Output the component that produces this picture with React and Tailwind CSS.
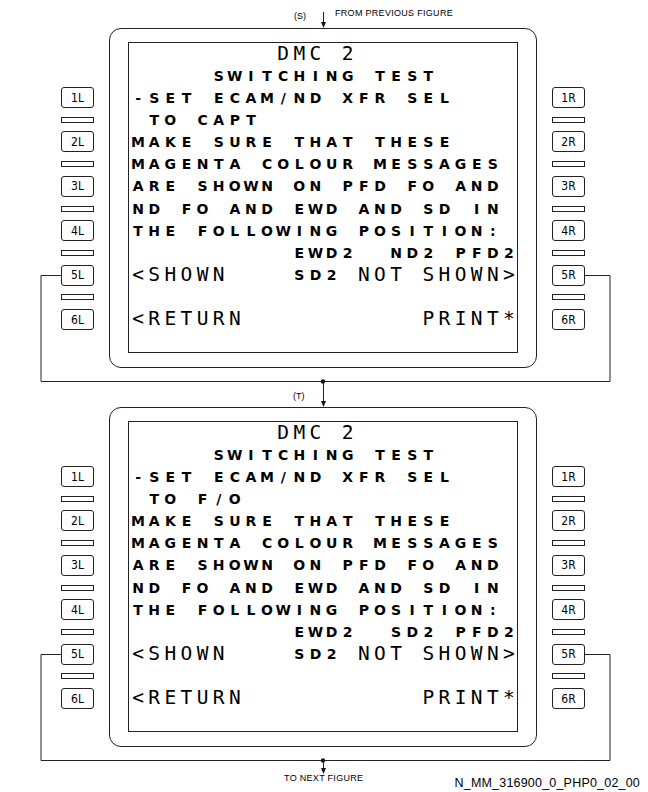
import React from 'react';

// 24 x 14 MCDU grid, L = large font, S = small font
const seg = (t, s, at = 0) => ({ t, s, at });

function screenRows(to, pos) {
  return [
    [seg('DMC 2', 'L', 9)],
    [seg('SWITCHING TEST', 'S', 5)],
    [seg('-SET ECAM/ND XFR SEL', 'S')],
    [seg(to, 'S', 1)],
    [seg('MAKE SURE THAT THESE', 'S')],
    [seg('MAGENTA COLOUR MESSAGES', 'S')],
    [seg('ARE SHOWN ON PFD FO AND', 'S')],
    [seg('ND FO AND EWD AND SD IN', 'S')],
    [seg('THE FOLLOWING POSITION:', 'S')],
    [seg(pos, 'S', 10)],
    [seg('<SHOWN', 'L'), seg('SD2', 'S', 10), seg('NOT SHOWN>', 'L', 14)],
    [],
    [seg('<RETURN', 'L'), seg('PRINT*', 'L', 18)],
    [],
  ];
}

const SCREENS = [
  screenRows('TO CAPT', 'EWD2  ND2 PFD2'),
  screenRows('TO F/O', 'EWD2  SD2 PFD2'),
];

function Row({ segs }) {
  const cells = Array.from({ length: 24 }, () => null);
  segs.forEach((g) => {
    g.t.split('').forEach((ch, i) => {
      cells[g.at + i] = { ch, s: g.s };
    });
  });
  return (
    <div className="grid grid-cols-[repeat(24,1fr)] items-center">
      {cells.map((c, i) => (
        <span
          key={i}
          className={
            c && c.s === 'L'
              ? "text-center font-['DejaVu_Sans_Mono',monospace] text-[19.5px] leading-none"
              : "text-center font-['DejaVu_Sans',sans-serif] text-[14px] font-bold leading-none"
          }
        >
          {c && c.ch !== ' ' ? c.ch : '\u00a0'}
        </span>
      ))}
    </div>
  );
}

function Keys({ side }) {
  const slots = [];
  for (let r = 0; r < 14; r++) {
    let item = null;
    if (r >= 2 && r <= 12) {
      const n = (r - 2) / 2 + 1;
      item =
        r % 2 === 0 ? (
          <div className="flex h-[21px] w-[33px] items-center justify-center rounded-[3px] border border-[#222] font-['Liberation_Sans_Narrow','DejaVu_Sans_Condensed','Liberation_Sans',sans-serif] text-[12px] leading-none">
            {n}
            {side}
          </div>
        ) : (
          <div className="h-[6px] w-[33px] border border-[#222]" />
        );
    }
    slots.push(
      <div key={r} className="flex items-center">
        {item}
      </div>
    );
  }
  return <div className="mt-[14px] grid h-[311px] w-[33px] grid-rows-[repeat(14,1fr)]">{slots}</div>;
}

function Panel({ rows }) {
  return (
    <div className="flex h-[340px] gap-[15px] pl-[61px]">
      <Keys side="L" />
      <div className="h-[340px] w-[428px] rounded-[12px] border border-[#222] px-[18px] pt-[13px]">
        <div className="grid h-[311px] w-[390px] grid-rows-[repeat(14,1fr)] border border-[#222] pl-[1px]">
          {rows.map((segs, i) => (
            <Row key={i} segs={segs} />
          ))}
        </div>
      </div>
      <Keys side="R" />
    </div>
  );
}

function Wires() {
  const loop = (y5, yb) => (
    <g>
      <polyline points={`61,${y5} 41,${y5} 41,${yb} 610,${yb} 610,${y5} 585,${y5}`} fill="none" stroke="#222" strokeWidth="1" />
      <circle cx="323" cy={yb} r="2.2" fill="#111" />
    </g>
  );
  const arrow = (y1, y2) => (
    <g>
      <line x1="323.5" y1={y1} x2="323.5" y2={y2 - 5} stroke="#222" strokeWidth="1" />
      <polygon points={`321,${y2 - 6} 326,${y2 - 6} 323.5,${y2}`} fill="#111" />
    </g>
  );
  return (
    <svg className="pointer-events-none absolute left-0 top-0" width="648" height="792">
      {arrow(12, 28)}
      {loop(275.5, 381.5)}
      {arrow(381, 407)}
      {loop(654.5, 760.5)}
      {arrow(760, 774)}
    </svg>
  );
}

export default function App() {
  return (
    <div className="relative h-[792px] w-[648px] overflow-hidden bg-white text-black">
      <div className="flex h-[28px] items-start pl-[294px] pt-[9px] font-['Liberation_Sans',sans-serif] text-[9px] leading-none">
        <span className="mt-[3px]">(S)</span>
        <span className="ml-[29px] tracking-[0.3px]">FROM PREVIOUS FIGURE</span>
      </div>
      <Panel rows={SCREENS[0]} />
      <div className="h-[39px] pl-[293px] pt-[24px] font-['Liberation_Sans',sans-serif] text-[9px] leading-none">(T)</div>
      <Panel rows={SCREENS[1]} />
      <div className="flex h-[45px] items-start font-['Liberation_Sans',sans-serif] leading-none">
        <span className="ml-[284px] mt-[27px] text-[9px] tracking-[0.3px]">TO NEXT FIGURE</span>
        <span className="ml-auto mr-[8px] mt-[30px] text-[12.5px] tracking-[0.2px]">N_MM_316900_0_PHP0_02_00</span>
      </div>
      <Wires />
    </div>
  );
}
